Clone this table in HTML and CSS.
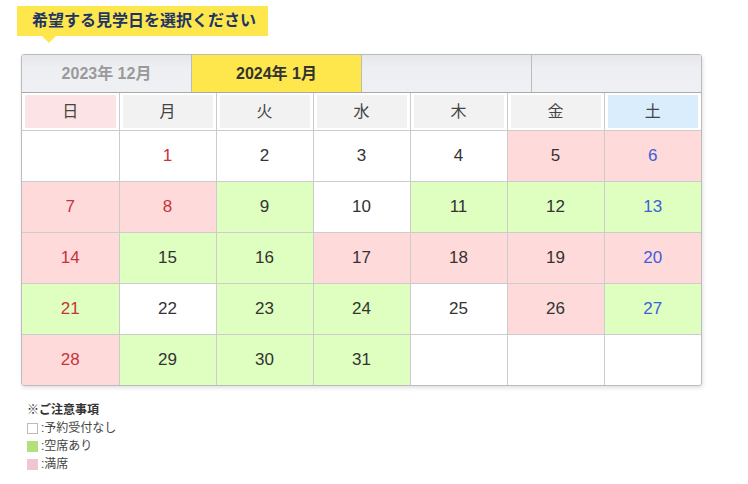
FILE: index.html
```html
<!DOCTYPE html>
<html lang="ja">
<head>
    <meta charset="UTF-8">
    <meta name="viewport" content="width=device-width, initial-scale=1.0">
    <title>見学日選択</title>
    <link rel="stylesheet" href="styles.css">
</head>
<body>
    <div class="page">
        <!-- 見出し -->
        <div class="title">希望する見学日を選択ください</div>

        <div class="calendar">
            <!-- 月タブ -->
            <div class="tabs">
                <div class="tab">2023年 12月</div>
                <div class="tab active">2024年 1月</div>
                <div class="tab"></div>
                <div class="tab"></div>
            </div>

            <table>
                <tr>
                    <th><span class="sun">日</span></th>
                    <th><span>月</span></th>
                    <th><span>火</span></th>
                    <th><span>水</span></th>
                    <th><span>木</span></th>
                    <th><span>金</span></th>
                    <th><span class="sat">土</span></th>
                </tr>
                <tr>
                    <td></td>
                    <td class="holiday">1</td>
                    <td>2</td>
                    <td>3</td>
                    <td>4</td>
                    <td class="full">5</td>
                    <td class="full sat">6</td>
                </tr>
                <tr>
                    <td class="full holiday">7</td>
                    <td class="full holiday">8</td>
                    <td class="open">9</td>
                    <td>10</td>
                    <td class="open">11</td>
                    <td class="open">12</td>
                    <td class="open sat">13</td>
                </tr>
                <tr>
                    <td class="full holiday">14</td>
                    <td class="open">15</td>
                    <td class="open">16</td>
                    <td class="full">17</td>
                    <td class="full">18</td>
                    <td class="full">19</td>
                    <td class="full sat">20</td>
                </tr>
                <tr>
                    <td class="open holiday">21</td>
                    <td>22</td>
                    <td class="open">23</td>
                    <td class="open">24</td>
                    <td>25</td>
                    <td class="full">26</td>
                    <td class="open sat">27</td>
                </tr>
                <tr>
                    <td class="full holiday">28</td>
                    <td class="open">29</td>
                    <td class="open">30</td>
                    <td class="open">31</td>
                    <td></td>
                    <td></td>
                    <td></td>
                </tr>
            </table>
        </div>

        <!-- 凡例 -->
        <div class="notes">
            <div class="notes-title">※ご注意事項</div>
            <div class="legend"><i class="box"></i>:予約受付なし</div>
            <div class="legend"><i class="box box-open"></i>:空席あり</div>
            <div class="legend"><i class="box box-full"></i>:満席</div>
        </div>
    </div>
</body>
</html>
```

FILE: styles.css
```css
/* 全体 */
body {
    margin: 0;
    font-family: "Liberation Sans", Arial, "Noto Sans CJK JP", sans-serif;
    color: #333;
    background: #fff;
}

.page {
    padding: 6px 0 0 17px;
}

/* 見出し（吹き出し） */
.title {
    position: relative;
    display: inline-block;
    height: 30px;
    line-height: 30px;
    padding: 0 12px 0 15px;
    background-color: #fde74c;
    color: #1e3466;
    font-size: 16px;
    font-weight: bold;
}

.title::after {
    content: "";
    position: absolute;
    left: 25px;
    top: 30px;
    border-left: 7px solid transparent;
    border-right: 7px solid transparent;
    border-top: 7px solid #fde74c;
}

/* カレンダー */
.calendar {
    width: 679px;
    margin: 18px 0 0 4px;
    border: 1px solid #bbb;
    border-radius: 3px;
    box-shadow: 1px 2px 4px rgba(0, 0, 0, 0.12);
    overflow: hidden;
}

.tabs {
    display: flex;
    height: 37px;
    border-bottom: 1px solid #aaa;
}

.tab {
    flex: 1;
    line-height: 37px;
    text-align: center;
    font-size: 16px;
    font-weight: bold;
    color: #9a9a9a;
    background: linear-gradient(#e6e7ea, #eeeff2 35%, #eff0f3);
    border-right: 1px solid #bbb;
}

.tab:last-child {
    border-right: none;
}

.tab.active {
    background: #fde74c;
    color: #333;
}

table {
    width: 100%;
    border-collapse: collapse;
    table-layout: fixed;
}

th, td {
    border: 1px solid #ccc;
    text-align: center;
    font-size: 16px;
    font-weight: normal;
}

tr:first-child th {
    border-top: none;
}

th:first-child, td:first-child {
    border-left: none;
}

th:last-child, td:last-child {
    border-right: none;
}

tr:last-child td {
    border-bottom: none;
}

th {
    padding: 2px 3px;
}

th span {
    display: block;
    height: 33px;
    line-height: 33px;
    background-color: #f2f2f2;
    color: #444;
}

th span.sun {
    background-color: #fce3e5;
}

th span.sat {
    background-color: #daedfc;
}

td {
    height: 50px;
    padding: 0;
    font-size: 17px;
    color: #333;
}

td.open {
    background-color: #dfffc0;
}

td.full {
    background-color: #ffdada;
}

td.holiday {
    color: #c8323c;
}

td.sat {
    color: #3d5ed8;
}

/* 凡例 */
.notes {
    margin: 15px 0 0 10px;
    font-size: 12px;
    line-height: 18px;
    color: #444;
}

.notes-title {
    font-weight: bold;
    color: #333;
}

.legend {
    display: flex;
    align-items: center;
}

.box {
    width: 9px;
    height: 9px;
    margin-right: 3px;
    border: 1px solid #bbb;
    background-color: #fff;
}

.box-open {
    border-color: #b3e07c;
    background-color: #b3e07c;
}

.box-full {
    border-color: #f0c6d2;
    background-color: #f0c6d2;
}
```
